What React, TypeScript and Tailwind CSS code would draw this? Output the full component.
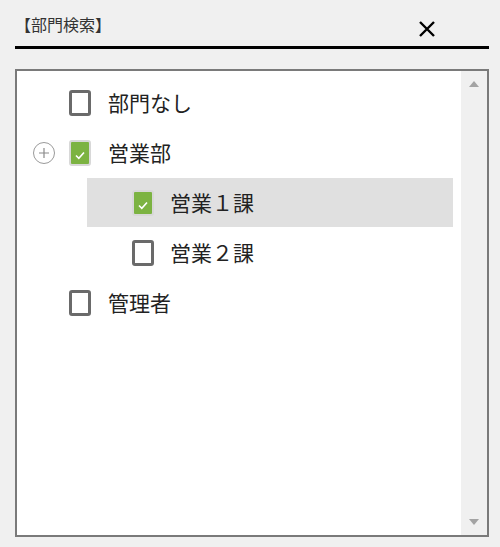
import { ReactNode } from "react";

const font = { fontFamily: '"Noto Sans CJK JP", "Noto Sans", sans-serif' };

const Checkbox = ({ checked }: { checked?: boolean }) => {
  if (checked) {
    return (
      <div className="w-[22px] h-[26px] shrink-0 rounded-[3px] border-2 border-[#d8d8d8] bg-[#7cb342] flex items-end justify-center pb-[4px]">
        <svg width="12" height="10" viewBox="0 0 12 10">
          <path d="M2 5.5 L4.8 8.3 L10 2.5" fill="none" stroke="#fff" strokeWidth="1.6" />
        </svg>
      </div>
    );
  }
  return <div className="w-[22px] h-[26px] shrink-0 rounded-[3px] border-[3px] border-[#6a6a6a] bg-white" />;
};

const Row = ({ children }: { children: ReactNode }) => (
  <div className="h-[50px] flex items-center">{children}</div>
);

const App = () => {
  return (
    <div className="w-[500px] h-[547px] bg-[#f0f0f0] text-[#222]" style={font}>
      <div className="h-[46px] flex items-start pl-[15px]">
        <div className="mt-[14px] text-[16px] leading-[20px] text-[#333]">【部門検索】</div>
        <svg className="mt-[20px] ml-auto mr-[64px]" width="18" height="18" viewBox="0 0 18 18">
          <path d="M2 2 L16 16 M16 2 L2 16" stroke="#000" strokeWidth="2.4" />
        </svg>
      </div>
      <div className="ml-[15px] w-[474px] h-[3px] bg-black" />

      <div className="mt-[20px] ml-[15px] w-[474px] h-[468px] border-2 border-[#7a7a7a] bg-white flex">
        <div className="flex-1 pt-[7px]">
          <Row>
            <div className="ml-[15px] w-[24px]" />
            <div className="ml-[13px]">
              <Checkbox />
            </div>
            <span className="ml-[17px] text-[21px]">部門なし</span>
          </Row>
          <Row>
            <div className="ml-[15px] w-[24px] flex justify-center">
              <svg width="24" height="24" viewBox="0 0 24 24">
                <circle cx="12" cy="12" r="10.5" fill="none" stroke="#9a9a9a" strokeWidth="1" />
                <path d="M12 7 V17 M7 12 H17" stroke="#8a8a8a" strokeWidth="1.2" />
              </svg>
            </div>
            <div className="ml-[13px]">
              <Checkbox checked />
            </div>
            <span className="ml-[17px] text-[21px]">営業部</span>
          </Row>
          <div className="ml-[70px] mr-[8px] h-[49px] mb-[1px] bg-[#e0e0e0] flex items-center pl-[45px]">
            <Checkbox checked />
            <span className="ml-[16px] text-[21px]">営業１課</span>
          </div>
          <div className="ml-[70px] mr-[8px] h-[50px] flex items-center pl-[45px]">
            <Checkbox />
            <span className="ml-[16px] text-[21px]">営業２課</span>
          </div>
          <Row>
            <div className="ml-[15px] w-[24px]" />
            <div className="ml-[13px]">
              <Checkbox />
            </div>
            <span className="ml-[17px] text-[21px]">管理者</span>
          </Row>
        </div>
        <div className="w-[26px] bg-[#f0f0f0] flex flex-col justify-between items-center py-[10px]">
          <svg width="10" height="6" viewBox="0 0 10 6">
            <path d="M5 0 L10 6 L0 6 Z" fill="#a3a3a3" />
          </svg>
          <svg width="10" height="6" viewBox="0 0 10 6">
            <path d="M0 0 L10 0 L5 6 Z" fill="#a3a3a3" />
          </svg>
        </div>
      </div>
    </div>
  );
};

export default App;
